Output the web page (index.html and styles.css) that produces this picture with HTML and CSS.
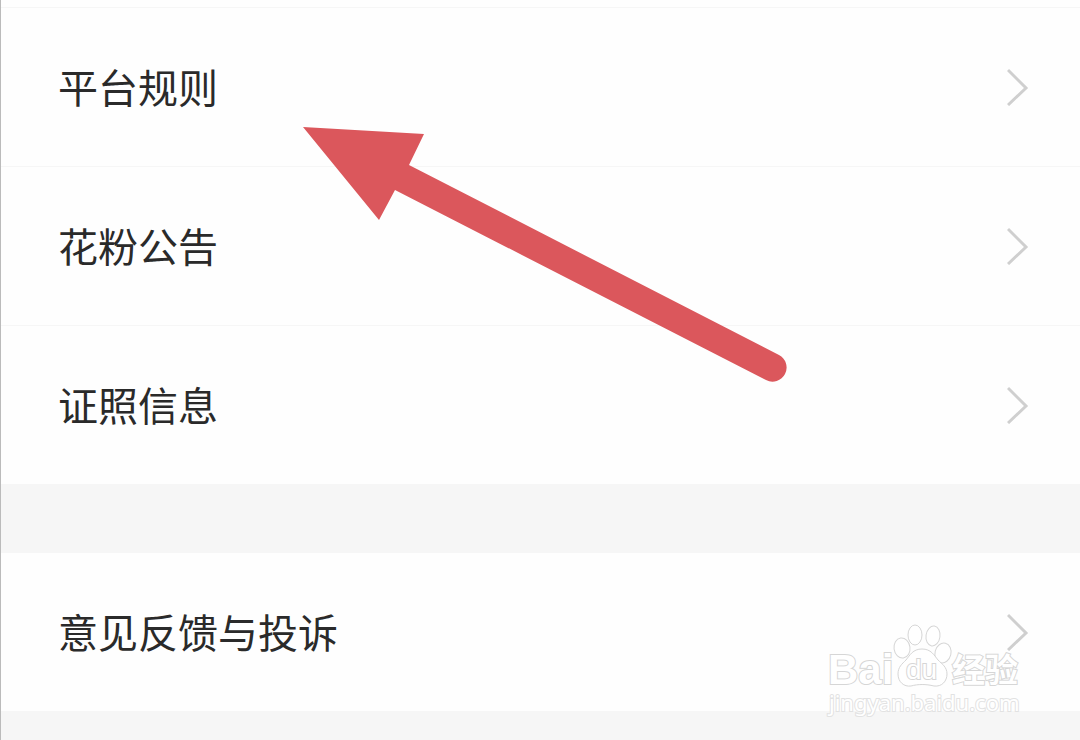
FILE: index.html
```
<!DOCTYPE html>
<html lang="zh-Hans">
<head>
  <meta charset="UTF-8" />
  <meta name="viewport" content="width=device-width, initial-scale=1" />
  <title>平台规则</title>
  <link rel="stylesheet" href="styles.css">
</head>
<body>
  <main class="page">
    <nav class="group group-rules">
      <a class="row" href="#rules">
        <span>平台规则</span>
        <svg class="chevron" viewBox="0 0 22 38" aria-hidden="true"><path d="M1 2L19 20L1 37" /></svg>
      </a>
      <a class="row" href="#notice">
        <span>花粉公告</span>
        <svg class="chevron" viewBox="0 0 22 38" aria-hidden="true"><path d="M1 2L19 20L1 37" /></svg>
      </a>
      <a class="row" href="#license">
        <span>证照信息</span>
        <svg class="chevron" viewBox="0 0 22 38" aria-hidden="true"><path d="M1 2L19 20L1 37" /></svg>
      </a>
    </nav>

    <nav class="group">
      <a class="row" href="#feedback">
        <span>意见反馈与投诉</span>
        <svg class="chevron" viewBox="0 0 22 38" aria-hidden="true"><path d="M1 2L19 20L1 37" /></svg>
      </a>
    </nav>

    <!-- arrow pointing at the first row -->
    <svg class="arrow" viewBox="303 127 484 256" aria-hidden="true">
      <path d="M303 127L424 134L409 165L779 355A14 14 0 0 1 766 380L395 190L379 220Z" />
    </svg>

    <svg class="watermark" viewBox="820 620 210 100" role="img" aria-label="Baidu 经验">
      <text class="mark-name" x="828" y="684">Bai</text>
      <ellipse cx="902" cy="648" rx="8" ry="10" transform="rotate(-8 902 648)" />
      <ellipse cx="915" cy="635" rx="7" ry="10" />
      <ellipse cx="933" cy="636" rx="7" ry="10" transform="rotate(8 933 636)" />
      <ellipse cx="943" cy="653" rx="8" ry="10" transform="rotate(14 943 653)" />
      <path d="M922 649C913 649 910 655 906 660C902 664 898 667 898 674C898 682 904 687 911 686C918 684 926 684 934 686C942 687 947 681 947 674C947 667 942 664 938 660C934 655 931 649 922 649Z" />
      <text class="mark-du" x="906" y="679">du</text>
      <text class="mark-cn" x="952" y="682">经验</text>
      <text class="mark-url" x="829" y="711">jingyan.baidu.com</text>
    </svg>
  </main>
</body>
</html>
```

FILE: styles.css
```
* {
  box-sizing: border-box;
}

body {
  margin: 0;
  background: #f6f6f6;
  color: #2a2a2a;
  font-family: "Noto Sans CJK SC", sans-serif;
}

.page {
  position: relative;
  min-height: 100vh;
  border-left: 1px solid #bbb;
  overflow: hidden;
}

.group {
  background: #fefefe;
}

.group-rules {
  margin-bottom: 69px;
  padding-top: 7px;
}

.row {
  display: flex;
  align-items: center;
  justify-content: space-between;
  min-height: 158px;
  padding: 0 51px 2px 57px;
  color: inherit;
  font-size: 40px;
  line-height: 60px;
  text-decoration: none;
}

.group-rules .row {
  min-height: 159px;
  border-top: 1px solid #f6f6f6;
}

.chevron {
  width: 22px;
  height: 38px;
  margin-top: 2px;
  fill: none;
  stroke: #cfcfcf;
  stroke-width: 3;
}

.arrow {
  position: absolute;
  top: 127px;
  left: 302px;
  width: 484px;
  height: 256px;
  fill: #db575c;
}

.watermark {
  position: absolute;
  top: 620px;
  right: 50px;
  width: 210px;
  height: 100px;
  fill: #fff;
  stroke: #d6d6d6;
  stroke-width: 1;
}

.watermark text {
  paint-order: stroke;
  stroke-width: 2;
}

.mark-name {
  font: bold 42px "Liberation Sans", sans-serif;
}

.mark-du {
  font: 28px "Liberation Sans", sans-serif;
}

.mark-cn {
  font: bold 33px "Noto Sans CJK SC", sans-serif;
}

.mark-url {
  font: 22px "Noto Sans", sans-serif;
  stroke: #e2e2e2;
}
```
